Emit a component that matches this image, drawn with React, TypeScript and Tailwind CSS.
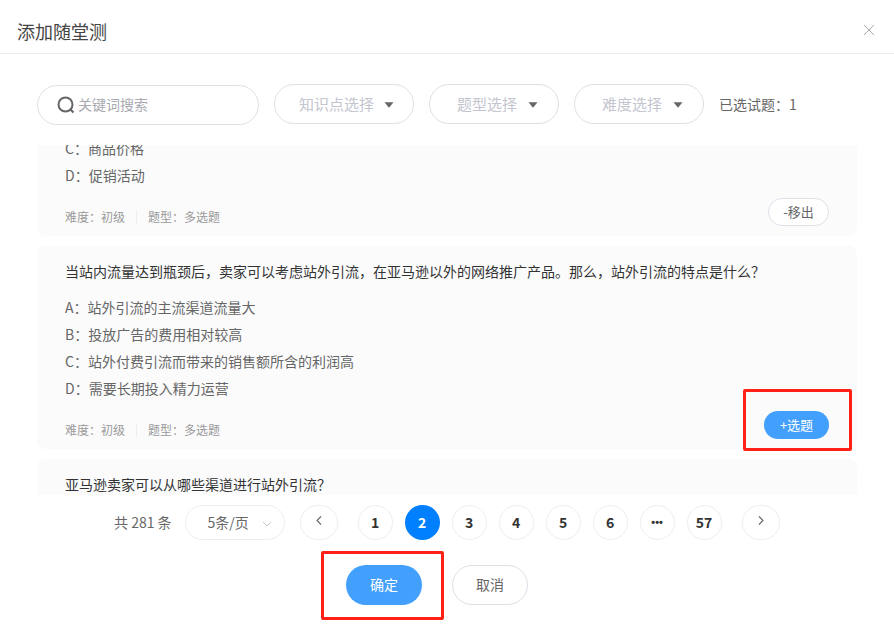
import React from 'react';

const filters = [
    { label: '知识点选择', width: 'w-[140px]', pad: 'pl-[24px]', gap: 'ml-[10px]' },
    { label: '题型选择', width: 'w-[130px]', pad: 'pl-[27px]', gap: 'ml-[11px]' },
    { label: '难度选择', width: 'w-[130px]', pad: 'pl-[27px]', gap: 'ml-[11px]' },
];

const pages = ['1', '2', '3', '4', '5', '6', '•••', '57'];

const Caret = () => (
    <svg width="10" height="6" viewBox="0 0 10 6" className="mt-px shrink-0">
        <path d="M0.5 0.3h9L5 5.8z" fill="#666" />
    </svg>
);

interface CardProps {
    question: string;
    options: string[];
    children: React.ReactNode;
}

const Card: React.FC<CardProps> = ({ question, options, children }) => (
    <div className="relative h-[203px] shrink-0 rounded-lg bg-[#fbfbfc] px-[28px] pt-[14px]">
        <p className="text-[14px] leading-[22px] text-[#333]">{question}</p>
        <ul className="mt-[12px]">
            {options.map((o) => (
                <li key={o} className="text-[14px] leading-[27px] text-[#666]">{o}</li>
            ))}
        </ul>
        <div className="mt-[9px] flex h-[28px] items-start justify-between">
            <div className="flex items-center pt-[9px] text-[12px] leading-[20px] text-[#999]">
                <span>难度：初级</span>
                <span className="mx-[11px] h-[14px] w-px bg-[#eeeeee]" />
                <span>题型：多选题</span>
            </div>
            {children}
        </div>
    </div>
);

export default function App() {
    return (
        <div className="h-[632px] w-[894px] overflow-hidden bg-white font-['Noto_Sans_CJK_SC','Noto_Sans',sans-serif]">
            <header className="flex h-[54px] items-center justify-between border-b border-[#ebebef] pl-[17px] pr-[19px]">
                <h1 className="mt-[8px] text-[18px] leading-[26px] font-normal text-[#444]">添加随堂测</h1>
                <svg width="12" height="12" viewBox="0 0 12 12" className="mt-[6px]">
                    <path d="M1 1l10 10M11 1L1 11" stroke="#aaa" strokeWidth="1" fill="none" />
                </svg>
            </header>

            <div className="flex items-start gap-[15px] pl-[37px] pt-[30px]">
                <div className="mt-px flex h-[40px] w-[222px] items-center rounded-full border border-[#dfdfe8] pl-[19px]">
                    <svg width="18" height="18" viewBox="0 0 18 18" className="-mt-px shrink-0">
                        <circle cx="8.5" cy="8.5" r="7" stroke="#666" strokeWidth="2" fill="none" />
                        <path d="M13 13l3.5 3.5" stroke="#666" strokeWidth="2.2" fill="none" />
                    </svg>
                    <span className="-mt-[2px] ml-[3px] text-[14px] text-[#a9a9b0]">关键词搜索</span>
                </div>
                {filters.map((f) => (
                    <div key={f.label} className={`flex h-[40px] items-center rounded-full border border-[#dfdfe8] ${f.width} ${f.pad}`}>
                        <span className="text-[15px] text-[#c4c5cf]">{f.label}</span>
                        <span className={f.gap}><Caret /></span>
                    </div>
                ))}
                <span className="h-[40px] text-[14px] leading-[40px] text-[#666]">已选试题：1</span>
            </div>

            <div className="ml-[37px] mt-[20px] h-[350px] w-[820px] overflow-hidden">
                <div className="-mt-[112px] flex flex-col gap-[10px]">
                    <Card question="亚马逊卖家选品时需要考虑哪些因素？" options={['A：市场需求', 'B：竞争程度', 'C：商品价格', 'D：促销活动']}>
                        <button className="h-[28px] w-[61px] rounded-full border border-[#dfdfe8] bg-white pb-px text-[13px] text-[#666]">-移出</button>
                    </Card>
                    <Card
                        question="当站内流量达到瓶颈后，卖家可以考虑站外引流，在亚马逊以外的网络推广产品。那么，站外引流的特点是什么？"
                        options={['A：站外引流的主流渠道流量大', 'B：投放广告的费用相对较高', 'C：站外付费引流而带来的销售额所含的利润高', 'D：需要长期投入精力运营']}
                    >
                        <button className="h-[28px] w-[65px] rounded-full bg-[#439ffc] text-[13px] text-white">+选题</button>
                        <div className="absolute left-[706px] top-[143px] h-[62px] w-[109px] rounded-[2px] border-[3px] border-[#ff2116]" />
                    </Card>
                    <Card question="亚马逊卖家可以从哪些渠道进行站外引流？" options={[]}>
                        <span />
                    </Card>
                </div>
            </div>

            <div className="mt-[10px] flex h-[35px] items-center pl-[114px]">
                <span className="text-[14px] text-[#666]">共 281 条</span>
                <div className="relative ml-[13px] flex h-[35px] w-[100px] items-center rounded-full border border-[#eeeeee] pl-[22px] text-[14px] text-[#666]">
                    5条/页
                    <svg width="10" height="6" viewBox="0 0 10 6" className="absolute right-[12px] top-[15px]">
                        <path d="M1 1l4 4 4-4" stroke="#c8c8d0" fill="none" />
                    </svg>
                </div>
                <div className="ml-[15px] flex h-[35px] w-[38px] items-center justify-center rounded-full border border-[#eeeeee]">
                    <svg width="6" height="9" viewBox="0 0 6 9" className="-mt-[4px]">
                        <path d="M5 0.5L1 4.5l4 4" stroke="#666" strokeWidth="1.1" fill="none" />
                    </svg>
                </div>
                <div className="ml-[20px] flex gap-[12px]">
                    {pages.map((p) =>
                        p === '2' ? (
                            <span key={p} className="flex h-[35px] w-[35px] items-center justify-center rounded-full bg-[#0080ff] text-[14px] font-bold text-white">{p}</span>
                        ) : (
                            <span key={p} className={`flex h-[35px] w-[35px] items-center justify-center rounded-full border border-[#eeeeee] font-bold text-[#333] ${p === '•••' ? "font-['Liberation_Sans'] text-[11px]" : 'text-[14px]'}`}>{p}</span>
                        )
                    )}
                </div>
                <div className="ml-[20px] flex h-[35px] w-[38px] items-center justify-center rounded-full border border-[#eeeeee]">
                    <svg width="6" height="9" viewBox="0 0 6 9" className="-mt-[4px]">
                        <path d="M1 0.5l4 4-4 4" stroke="#666" strokeWidth="1.1" fill="none" />
                    </svg>
                </div>
            </div>

            <div className="mt-[25px] flex gap-[30px] pl-[346px]">
                <div className="relative">
                    <button className="h-[40px] w-[76px] rounded-full bg-[#439ffc] pb-[2px] text-[14px] text-white">确定</button>
                    <div className="absolute -left-[25px] -top-[14px] h-[69px] w-[123px] rounded-[2px] border-[3px] border-[#ff2116]" />
                </div>
                <button className="h-[40px] w-[76px] rounded-full border border-[#dfdfe8] bg-white pb-[2px] text-[14px] text-[#666]">取消</button>
            </div>
        </div>
    );
}
